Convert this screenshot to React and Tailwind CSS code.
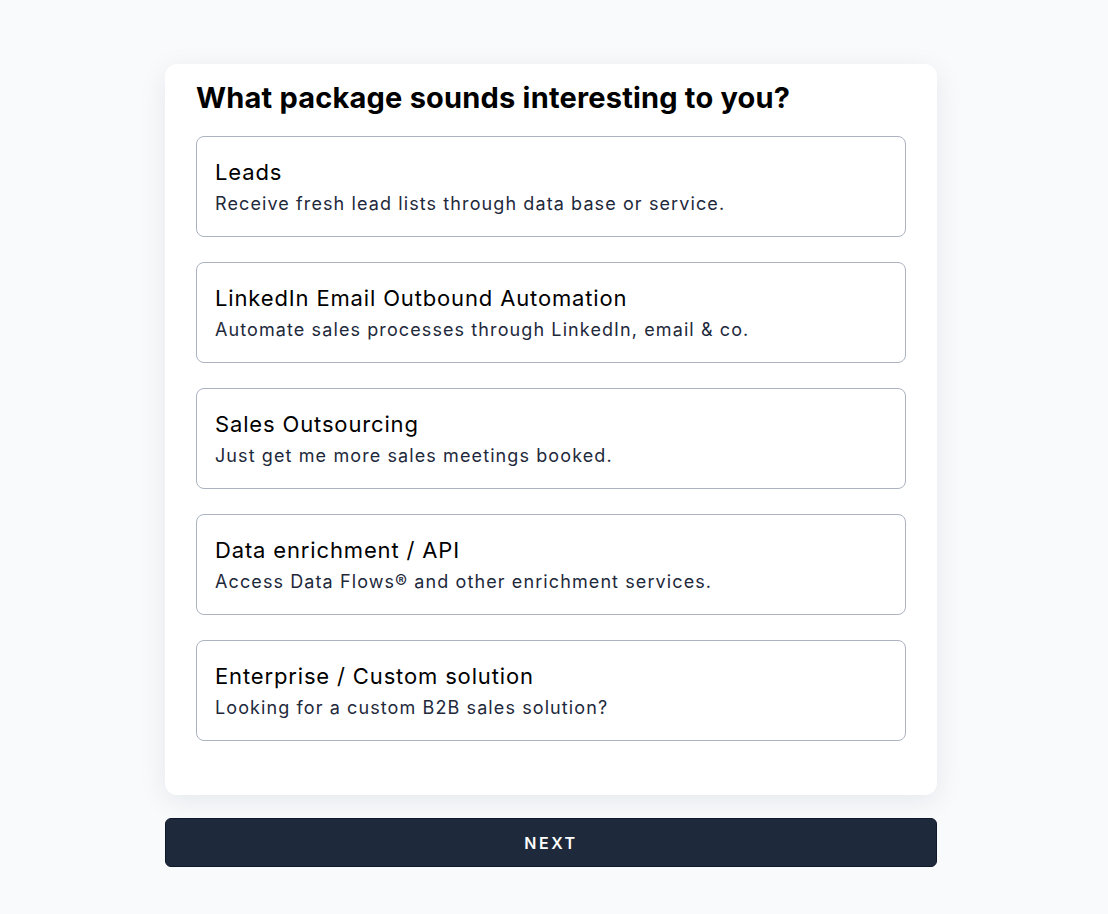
import React, { useState } from 'react';

const packages = [
  { title: 'Leads', desc: 'Receive fresh lead lists through data base or service.' },
  { title: 'LinkedIn Email Outbound Automation', desc: 'Automate sales processes through LinkedIn, email & co.' },
  { title: 'Sales Outsourcing', desc: 'Just get me more sales meetings booked.' },
  { title: 'Data enrichment / API', desc: 'Access Data Flows® and other enrichment services.' },
  { title: 'Enterprise / Custom solution', desc: 'Looking for a custom B2B sales solution?' },
];

const App = () => {
  const [selected, setSelected] = useState(null);

  return (
    <main className="min-h-screen bg-[#f8fafc] pt-[64px] font-['Inter',sans-serif]">
      <div className="w-[772px] ml-[165px]">
        <div className="bg-white rounded-[12px] shadow-[0_6px_28px_rgba(15,23,42,0.08)] px-[31px] pt-[18px] pb-[54px]">
          <h1 className="text-[29px] leading-[32px] font-bold text-black tracking-[0.2px]">
            What package sounds interesting to you?
          </h1>
          <div className="mt-[22px] flex flex-col gap-[25px]">
            {packages.map((p, i) => (
              <button
                key={i}
                onClick={() => setSelected(i)}
                className={`text-left w-full h-[101px] rounded-[8px] border px-[18px] pt-[2px] flex flex-col justify-center ${selected === i ? 'border-slate-800' : 'border-[#aab3bf]'}`}
              >
                <p className="text-[22px] leading-[32px] text-black tracking-[0.85px]">{p.title}</p>
                <p className="text-[18px] leading-[32px] text-[#1e293b] tracking-[1.1px]">{p.desc}</p>
              </button>
            ))}
          </div>
        </div>
        <button className="mt-[23px] w-full h-[49px] rounded-[6px] bg-[#1e293b] border border-[#0f172a] text-white text-[16px] font-semibold tracking-[2.5px]">
          NEXT
        </button>
      </div>
    </main>
  );
};

export default App;
